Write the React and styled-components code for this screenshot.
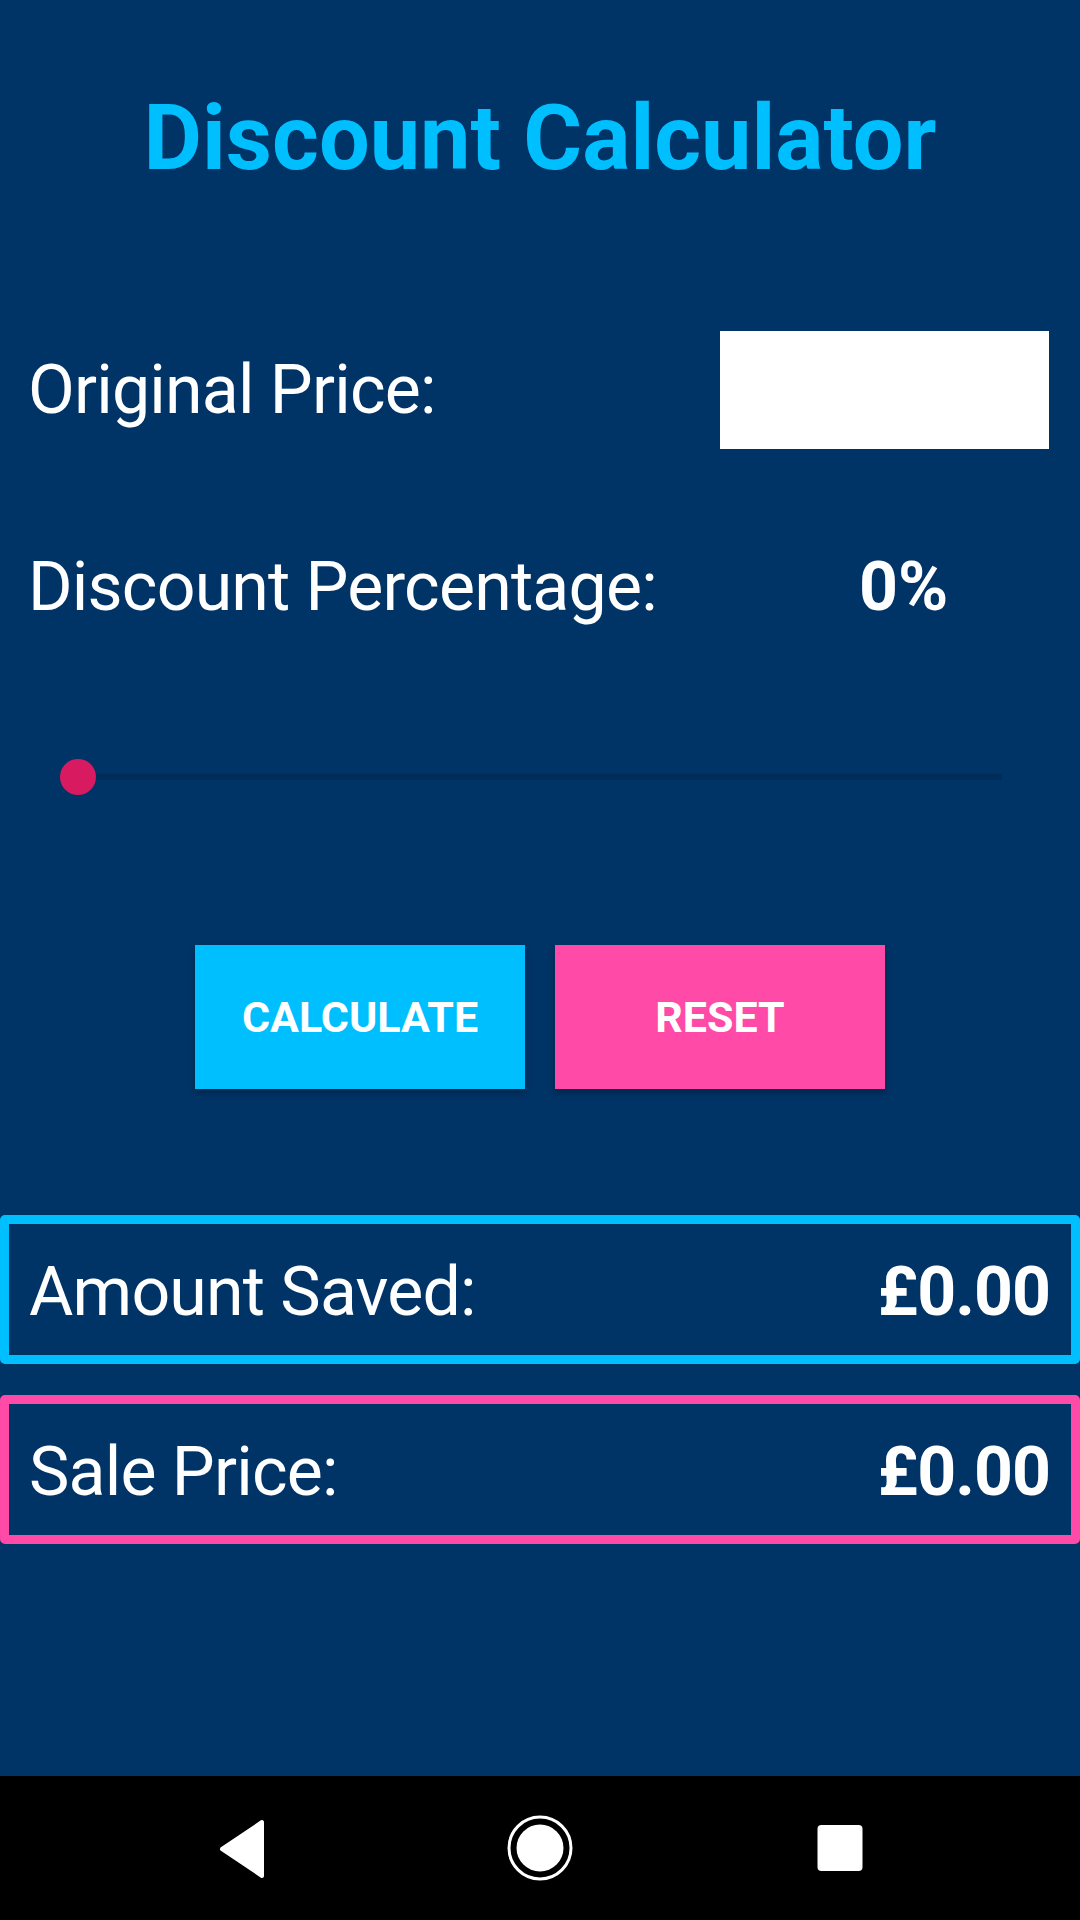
import React, { useState } from "react"
import styled, { createGlobalStyle } from "styled-components"

const navy = "#003366"
const sky = "#00bfff"
const pink = "#ff4aa8"

const GlobalStyle = createGlobalStyle`
  html, body {
    margin: 0;
    padding: 0;
    background: ${navy};
  }
  * {
    box-sizing: border-box;
  }
`

const Screen = styled.div`
  width: 1080px;
  height: 1920px;
  display: flex;
  flex-direction: column;
  background: ${navy};
  font-family: Roboto, "Noto Sans", sans-serif;
  color: #ffffff;
  overflow: hidden;
`

const Content = styled.main`
  flex: 1;
  display: flex;
  flex-direction: column;
`

const Title = styled.h1`
  margin: 0;
  padding-top: 94px;
  font-size: 90px;
  line-height: 90px;
  font-weight: 700;
  text-align: center;
  color: ${sky};
`

const FieldRow = styled.div`
  display: flex;
  align-items: center;
  justify-content: space-between;
  height: ${({ $height }) => $height}px;
  margin-top: ${({ $top }) => $top}px;
  padding: 0 31px 0 28px;
`

const Label = styled.span`
  font-size: 68px;
  line-height: 68px;
  font-weight: 400;
  letter-spacing: -0.8px;
`

const PriceInput = styled.input`
  width: 329px;
  height: 118px;
  border: none;
  outline: none;
  background: #ffffff;
  font-family: inherit;
  font-size: 52px;
  padding: 0 16px;
`

const PercentValue = styled.span`
  width: 329px;
  padding-left: 139px;
  font-size: 68px;
  line-height: 68px;
  font-weight: 700;
`

const SliderArea = styled.div`
  margin: 138px 78px 0;
  height: 36px;
  display: flex;
  align-items: center;
`

const Track = styled.div`
  position: relative;
  flex: 1;
  height: 6px;
  background: #002c59;
`

const Thumb = styled.div`
  position: absolute;
  left: -18px;
  top: -15px;
  width: 36px;
  height: 36px;
  border-radius: 50%;
  background: #d81b60;
`

const ButtonRow = styled.div`
  display: flex;
  justify-content: center;
  gap: 30px;
  margin-top: 150px;
`

const ActionButton = styled.button`
  width: 330px;
  height: 144px;
  border: none;
  background: ${({ $color }) => $color};
  color: #ffffff;
  font-family: Roboto, "Noto Sans", sans-serif;
  font-size: 43px;
  font-weight: 700;
  text-transform: uppercase;
  box-shadow: 0 4px 6px rgba(0, 0, 0, 0.25);
  cursor: pointer;
`

const Results = styled.section`
  display: flex;
  flex-direction: column;
  gap: 31px;
  margin-top: 126px;
`

const ResultBox = styled.div`
  height: 149px;
  border: 9px solid ${({ $color }) => $color};
  border-radius: 5px;
  display: flex;
  align-items: center;
  justify-content: space-between;
  padding: 4px 21px 0 20px;
`

const Amount = styled.span`
  font-size: 68px;
  line-height: 68px;
  font-weight: 700;
  letter-spacing: -1px;
`

const NavBar = styled.nav`
  height: 144px;
  background: #000000;
  display: flex;
  align-items: center;
  justify-content: center;
  gap: 200px;
`

const NavButton = styled.div`
  width: 100px;
  height: 100px;
  display: flex;
  align-items: center;
  justify-content: center;
`

const formatMoney = (v) => `£${v.toFixed(2)}`

const App = () => {
  const [price, setPrice] = useState("")
  const [percent] = useState(0)
  const [saved, setSaved] = useState(0)
  const [sale, setSale] = useState(0)

  const handleCalculate = () => {
    const p = parseFloat(price) || 0
    const s = (p * percent) / 100
    setSaved(s)
    setSale(p - s)
  }

  const handleReset = () => {
    setPrice("")
    setSaved(0)
    setSale(0)
  }

  return (
    <Screen>
      <GlobalStyle />
      <Content>
        <Title>Discount Calculator</Title>

        <FieldRow $top={147} $height={118}>
          <Label>Original Price:</Label>
          <PriceInput value={price} onChange={(e) => setPrice(e.target.value)} inputMode="decimal" />
        </FieldRow>

        <FieldRow $top={104} $height={68}>
          <Label>Discount Percentage:</Label>
          <PercentValue>{percent}%</PercentValue>
        </FieldRow>

        <SliderArea>
          <Track>
            <Thumb />
          </Track>
        </SliderArea>

        <ButtonRow>
          <ActionButton $color={sky} onClick={handleCalculate}>Calculate</ActionButton>
          <ActionButton $color={pink} onClick={handleReset}>Reset</ActionButton>
        </ButtonRow>

        <Results>
          <ResultBox $color={sky}>
            <Label>Amount Saved:</Label>
            <Amount>{formatMoney(saved)}</Amount>
          </ResultBox>
          <ResultBox $color={pink}>
            <Label>Sale Price:</Label>
            <Amount>{formatMoney(sale)}</Amount>
          </ResultBox>
        </Results>
      </Content>

      <NavBar>
        <NavButton>
          <svg width="60" height="64" viewBox="0 0 60 64">
            <path d="M52 6 L52 60 L12 33 Z" fill="#fff" stroke="#fff" strokeWidth="4" strokeLinejoin="round" />
          </svg>
        </NavButton>
        <NavButton>
          <svg width="70" height="70" viewBox="0 0 70 70">
            <circle cx="35" cy="35" r="31" fill="none" stroke="#fff" strokeWidth="3" />
            <circle cx="35" cy="35" r="23.5" fill="#fff" />
          </svg>
        </NavButton>
        <NavButton>
          <svg width="46" height="46" viewBox="0 0 46 46">
            <rect x="0.5" y="0" width="45" height="46" rx="4" fill="#fff" />
          </svg>
        </NavButton>
      </NavBar>
    </Screen>
  )
}

export default App
